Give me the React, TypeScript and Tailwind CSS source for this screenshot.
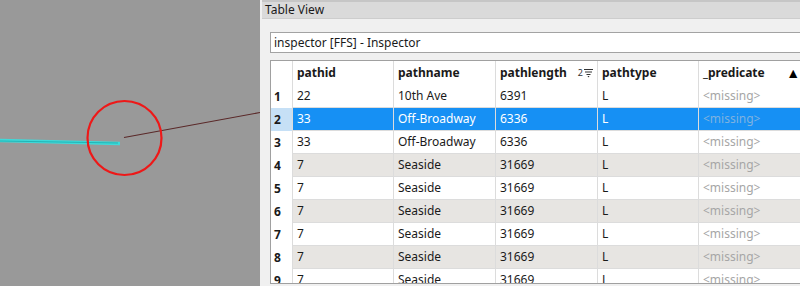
import React from 'react'

type Row = { id: string; name: string; len: string; type: string }

const rows: Row[] = [
  { id: '22', name: '10th Ave', len: '6391', type: 'L' },
  { id: '33', name: 'Off-Broadway', len: '6336', type: 'L' },
  { id: '33', name: 'Off-Broadway', len: '6336', type: 'L' },
  { id: '7', name: 'Seaside', len: '31669', type: 'L' },
  { id: '7', name: 'Seaside', len: '31669', type: 'L' },
  { id: '7', name: 'Seaside', len: '31669', type: 'L' },
  { id: '7', name: 'Seaside', len: '31669', type: 'L' },
  { id: '7', name: 'Seaside', len: '31669', type: 'L' },
  { id: '7', name: 'Seaside', len: '31669', type: 'L' },
]

const cols = 'grid grid-cols-[22px_101px_102px_102px_101px_105px]'

function SortIcon() {
  return (
    <svg width="9" height="10" viewBox="0 0 9 10" className="text-[#333]">
      <path d="M0 1.5H9M1 4H8M2.5 6.5H6.5" stroke="currentColor" strokeWidth="1" fill="none" />
      <path d="M3.5 8H5.5L4.5 9.5Z" fill="currentColor" />
    </svg>
  )
}

function MapView() {
  return (
    <div className="relative w-[260px] h-full bg-[#999999] shrink-0">
      <svg width="260" height="286" className="absolute inset-0">
        <line x1="0" y1="140.5" x2="120" y2="143.5" stroke="#3fd9d9" strokeWidth="3.5" />
        <line x1="0" y1="141" x2="118" y2="143" stroke="#22b4b4" strokeWidth="1" />
        <line x1="124" y1="137.5" x2="260" y2="112.5" stroke="#5a2828" strokeWidth="1.2" />
        <circle cx="124.5" cy="138" r="37" fill="none" stroke="#ee1818" strokeWidth="2.2" />
      </svg>
    </div>
  )
}

export default function App() {
  return (
    <div
      className="w-[800px] h-[286px] flex overflow-hidden text-[12px] text-[#1a1a1a]"
      style={{ fontFamily: '"Noto Sans", "Open Sans", sans-serif' }}
    >
      <MapView />
      <div className="flex-1 flex flex-col bg-[#f0f0f0] min-w-0">
        <div className="ml-[2px] h-[19px] bg-[#dadada] border-t-2 border-[#c6c6c6] border-b border-b-[#cdcdcd] flex items-center pl-[3px] leading-none">
          Table View
        </div>
        <div className="pl-[10px] pt-[13px] flex flex-col">
          <div className="h-[21px] w-[540px] border border-[#a3a3a3] bg-white flex items-center pl-[3px] leading-none">
            inspector [FFS] - Inspector
          </div>
          <div className="mt-[7px] w-[540px] h-[224px] border border-r-0 border-[#a0a0a0] bg-white overflow-hidden">
            <div className={`${cols} h-[24px] font-bold`}>
              <div className="border-r border-[#dcdcdc]" />
              <div className="border-r border-[#dcdcdc] pl-[4px] flex items-center">pathid</div>
              <div className="border-r border-[#dcdcdc] pl-[4px] flex items-center">pathname</div>
              <div className="border-r border-[#dcdcdc] pl-[4px] pr-[4px] flex items-center justify-between">
                <span>pathlength</span>
                <span className="flex items-center gap-[1px] font-normal text-[9px] text-[#333]">
                  2<SortIcon />
                </span>
              </div>
              <div className="border-r border-[#dcdcdc] pl-[4px] flex items-center">pathtype</div>
              <div className="pl-[4px] pr-[4px] flex items-center justify-between">
                <span>_predicate</span>
                <span className="text-[14px] leading-none text-black">▲</span>
              </div>
            </div>
            {rows.map((r, i) => {
              const sel = i === 1
              const alt = i >= 3 && i % 2 === 1
              const bg = sel ? 'bg-[#1690f4]' : alt ? 'bg-[#e7e5e2]' : 'bg-white'
              const fg = sel ? 'text-white' : ''
              return (
                <div key={i} className={`${cols} h-[23px]`}>
                  <div
                    className={`border-r border-[#dcdcdc] pl-[3px] flex items-center font-bold ${sel ? 'bg-[#c6e0f6]' : 'bg-white'}`}
                  >
                    {i + 1}
                  </div>
                  <div className={`${bg} ${fg} border-r border-b border-[#dcdcdc] pl-[4px] flex items-center`}>{r.id}</div>
                  <div className={`${bg} ${fg} border-r border-b border-[#dcdcdc] pl-[4px] flex items-center`}>{r.name}</div>
                  <div className={`${bg} ${fg} border-r border-b border-[#dcdcdc] pl-[4px] flex items-center`}>{r.len}</div>
                  <div className={`${bg} ${fg} border-r border-b border-[#dcdcdc] pl-[4px] flex items-center`}>{r.type}</div>
                  <div
                    className={`${bg} border-b border-[#dcdcdc] pl-[4px] flex items-center ${sel ? 'text-[#7fb2e0]' : 'text-[#a6a6a6]'}`}
                  >
                    &lt;missing&gt;
                  </div>
                </div>
              )
            })}
          </div>
        </div>
      </div>
    </div>
  )
}
